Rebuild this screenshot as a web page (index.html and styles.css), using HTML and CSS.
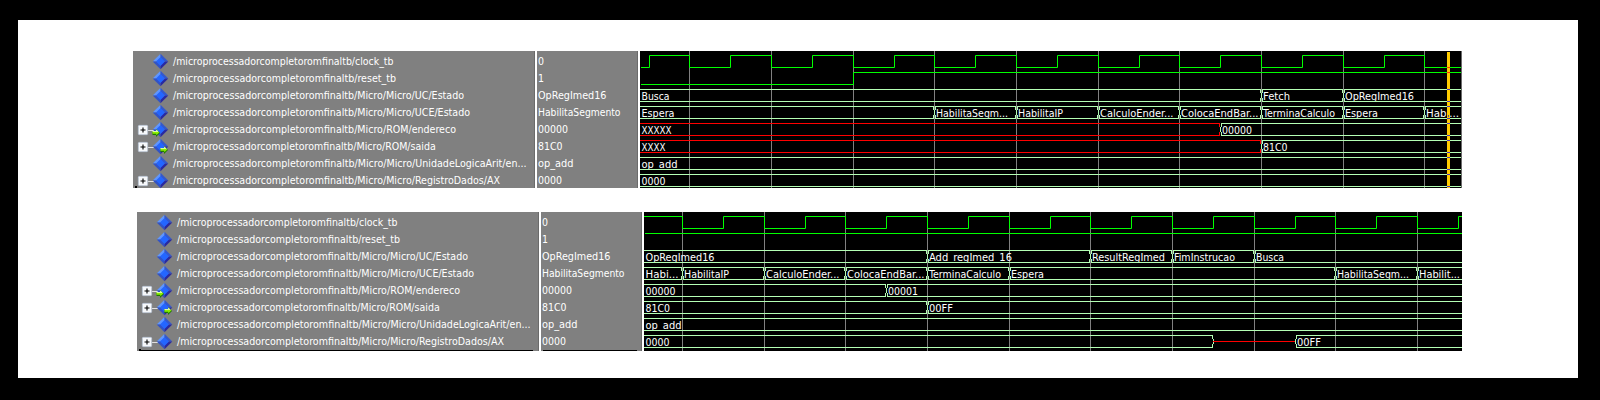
FILE: index.html
```
<!DOCTYPE html>
<html lang="pt">
<head>
<meta charset="utf-8">
<title>Wave</title>
<link rel="stylesheet" href="styles.css">
</head>
<body>
<main class="paper">
  <section class="panel panel-first" id="first"></section>
  <section class="panel panel-second" id="second"></section>
</main>
<script src="wave.js"></script>
</body>
</html>
```
FILE: styles.css
```
body { margin: 0; width: 1600px; height: 400px; overflow: hidden; background: #000; display: flex; font-family: "DejaVu Sans Condensed", "DejaVu Sans", sans-serif; font-stretch: condensed; font-size: 11px; }
.paper { margin: 20px 0 0 18px; width: 1560px; height: 358px; background: #fff; overflow: hidden; }
.panel { display: flex; }
.panel-first { margin: 31px 0 0 115px; height: 137px; }
.panel-second { margin: 24px 0 0 119px; height: 139px; }
.col { box-sizing: border-box; background: #808080; color: #fff; flex: none; position: relative; border-right: 1px solid #6b6b6b; margin-right: 2px; }
.names { width: 402px; padding-top: 2px; }
.values { width: 101px; padding-top: 2px; }
.row { height: 17px; display: flex; align-items: center; }
.panel-first .row:nth-child(8) { height: 16px; }
.names .icon { width: 40px; height: 17px; flex: none; display: block; }
.values .row { padding-left: 1.4px; }
.label { display: block; height: 17px; overflow: visible; flex: none; }
.wave { display: block; background: #000; flex: none; }
.endline { width: 1px; background: #6b6b6b; flex: none; }
.shade { position: absolute; bottom: 0; height: 1px; background: #000; }
.names .shade { left: 3px; right: 5px; }
.values .shade { left: 2px; right: 4px; }
.corner { position: absolute; left: 2px; bottom: 0; width: 2px; height: 2px; background: #000; }
text { fill: #fff; font-size: 11px; }
```
FILE: wave.js
```
const root = '/microprocessadorcompletoromfinaltb/';
const signals = [
  ['clock_tb', 220.5, '0', 6], ['reset_tb', 223, '1', 6],
  ['Micro/Micro/UC/Estado', 291, 'OpRegImed16', 68.5],
  ['Micro/Micro/UCE/Estado', 297, 'HabilitaSegmento', 82.5],
  ['Micro/ROM/endereco', 283, '00000', 30, 'in'],
  ['Micro/ROM/saida', 262.7, '81C0', 24.5, 'out'],
  ['Micro/Micro/UnidadeLogicaArit/en...', 353.5, 'op_add', 35.5],
  ['Micro/Micro/RegistroDados/AX', 327, '0000', 24, 'plain']
];
const arrow = (x, y) => `<path d="M${x} ${y + 2}h3.5v-2l4 4l-4 4v-2h-3.5z" fill="#1f7a00"/><path d="M${x} ${y + 2}h3.8v-1.6l3 3.2l-3 2.6v-1.4h-3.8z" fill="#8cf000"/><path d="M${x} ${y + 2}h3.8v-1.6l2.2 2.4h-6z" fill="#f4ffe4"/>`;
function icon(kind) {
  let s = '<svg class="icon" viewBox="0 0 40 17">';
  if (kind) s += '<path d="M15 9.5h6" stroke="#e0e0e0"/><rect x="5.3" y="4.3" width="9.4" height="9.4" rx="1" fill="#f6f8fb" stroke="#a9b8cf" stroke-width=".6"/><path d="M7.5 9h5M10 6.5v5" stroke="#000" stroke-width="1.1"/>';
  s += '<path d="M27.5 .7L19.7 8.5h7.8z" fill="#5f96ff"/><path d="M27.5 .7L35.3 8.5h-7.8z" fill="#3458cc"/><path d="M19.7 8.5L27.5 16.3V8.5z" fill="#3153c6"/><path d="M35.3 8.5L27.5 16.3V8.5z" fill="#2929a0"/><path d="M27.5 4L32 8.5L27.5 13L23 8.5z" fill="#2466ff"/>';
  if (kind === 'in') s += arrow(19.5, 8);
  if (kind === 'out') s += arrow(27.5, 8);
  return s + '</svg>';
}
const txt = (x, y, s, w) => `<text x="${x}" y="${y}" textLength="${w}" lengthAdjust="spacingAndGlyphs">${s}</text>`;
const label = (s, w) => `<svg class="label" width="${w}">${txt(0, 12, s, w)}</svg>`;
const rect = (x, y, w, h, c) => `<rect x="${x}" y="${y}" width="${w}" height="${h}" fill="${c}"/>`;
const G = '#00ff00', B = '#b4ffb4', R = '#ff0000', GRID = '#808080';

// One bus row: items are [start, text, text width, kind].
// Labels go first; the strip under them hides descenders below the bus line.
function bus(items, row, width, grid) {
  const y = 4 + 17 * row;
  let s = '', lines = '';
  items.forEach(([start, t, w, kind], i) => {
    const c = kind ? R : B, end = i + 1 < items.length ? items[i + 1][0] : width;
    const last = i + 1 === items.length;
    if (kind === 'mid') { lines += rect(start, y + 6, end - start, 1, R); return; }
    const a = i ? start + 1 : 0;
    lines += rect(a, y, end - a, 1, c) + rect(a, y + 12, end - a, 1, c);
    if (i) lines += rect(start + 1, y, 1, 4, c) + rect(start, y + 4, 1, 5, c) + rect(start + 1, y + 9, 1, 4, c);
    if (!last) lines += rect(end - 1, y, 1, 4, c) + rect(end, y + 4, 1, 5, c) + rect(end - 1, y + 9, 1, 4, c);
    if (t) s += txt(start + 2 - (i ? 0 : .5), y + 11, t, w);
  });
  s += rect(0, y + 12, width, 4, '#000') + grid.map(x => rect(x, y + 12, 1, 4, GRID)).join('');
  return s + lines;
}
function wave(d) {
  let s = d.falls.map(x => rect(x, 0, 1, d.h, GRID)).join('');
  let p = d.high ? 'M0 4.5' : `M1 16.5H${d.rises[0] + .5}V4.5`;
  const rises = d.high ? d.rises : d.rises.slice(1);
  d.falls.forEach((f, i) => { p += `H${f + .5}V16.5`; if (rises[i]) p += `H${rises[i] + .5}V4.5`; });
  p += 'H' + d.w + (d.high ? 'M1 21.5H' + d.w : 'M1 33.5H213.5V21.5H' + d.w);
  s += `<path d="${p}" fill="none" stroke="${G}"/>`;
  s += d.buses.map((b, i) => bus(b, i + 2, d.w, d.falls)).join('');
  if (d.cursor) {
    s += rect(807, 1, 3, d.h - 1, '#ffcc00') + rect(807, 16, 3, 1, '#ff3300') + rect(807, 21, 3, 1, '#ff3300');
    for (let i = 2; i < 8; i++) s += rect(807, 4 + 17 * i, 3, 1, '#4b33b4') + rect(807, 16 + 17 * i, 3, 1, '#4b33b4');
    s += rect(808, 64, 1, 2, '#4b5090');
  }
  return `<svg class="wave" width="${d.w}" height="${d.h}">${s}</svg>`;
}
const first = { w: 821, h: 137, cursor: true,
  rises: [9, 90, 172, 254, 335, 417, 499, 580, 662, 744],
  falls: [49, 131, 213, 294, 376, 458, 539, 621, 703, 784],
  buses: [
    [[0, 'Busca', 28], [621, 'Fetch', 27], [703, 'OpRegImed16', 69]],
    [[0, 'Espera', 33], [294, 'HabilitaSegm...', 72], [376, 'HabilitaIP', 45], [458, 'CalculoEnder...', 73.5], [539, 'ColocaEndBar...', 77.5], [621, 'TerminaCalculo', 72], [703, 'Espera', 33], [784, 'Habi...', 33]],
    [[0, 'XXXXX', 30, 'x'], [580, '00000', 30]],
    [[0, 'XXXX', 24, 'x'], [621, '81C0', 24.5]],
    [[0, 'op_add', 36]], [[0, '0000', 24]]
  ] };
const second = { w: 818, h: 139, high: true,
  rises: [79, 161, 242, 324, 406, 487, 569, 651, 732, 814],
  falls: [38, 120, 201, 283, 365, 446, 528, 610, 691, 773],
  buses: [
    [[0, 'OpRegImed16', 69], [283, 'Add_regImed_16', 83], [446, 'ResultRegImed', 73], [528, 'FimInstrucao', 61], [610, 'Busca', 28]],
    [[0, 'Habi...', 33], [38, 'HabilitaIP', 45], [120, 'CalculoEnder...', 73.5], [201, 'ColocaEndBar...', 77.5], [283, 'TerminaCalculo', 72], [365, 'Espera', 33], [691, 'HabilitaSegm...', 72], [773, 'Habilit...', 41]],
    [[0, '00000', 30], [242, '00001', 30]],
    [[0, '81C0', 24.5], [283, '00FF', 24]],
    [[0, 'op_add', 36]],
    [[0, '0000', 24], [569, '', 0, 'mid'], [651, '00FF', 24]]
  ] };
function panel(id, d) {
  const shade = d.high ? '<i class="shade"></i>' : '';
  const names = signals.map(r => `<div class="row">${icon(r[4])}${label(root + r[0], r[1])}</div>`).join('');
  const values = signals.map(r => `<div class="row">${label(r[2], r[3])}</div>`).join('');
  document.getElementById(id).innerHTML = `<div class="col names">${names}${shade}<i class="corner"></i></div><div class="col values">${values}${shade}</div>${wave(d)}${d.cursor ? '<div class="endline"></div>' : ''}`;
}
panel('first', first);
panel('second', second);
```
